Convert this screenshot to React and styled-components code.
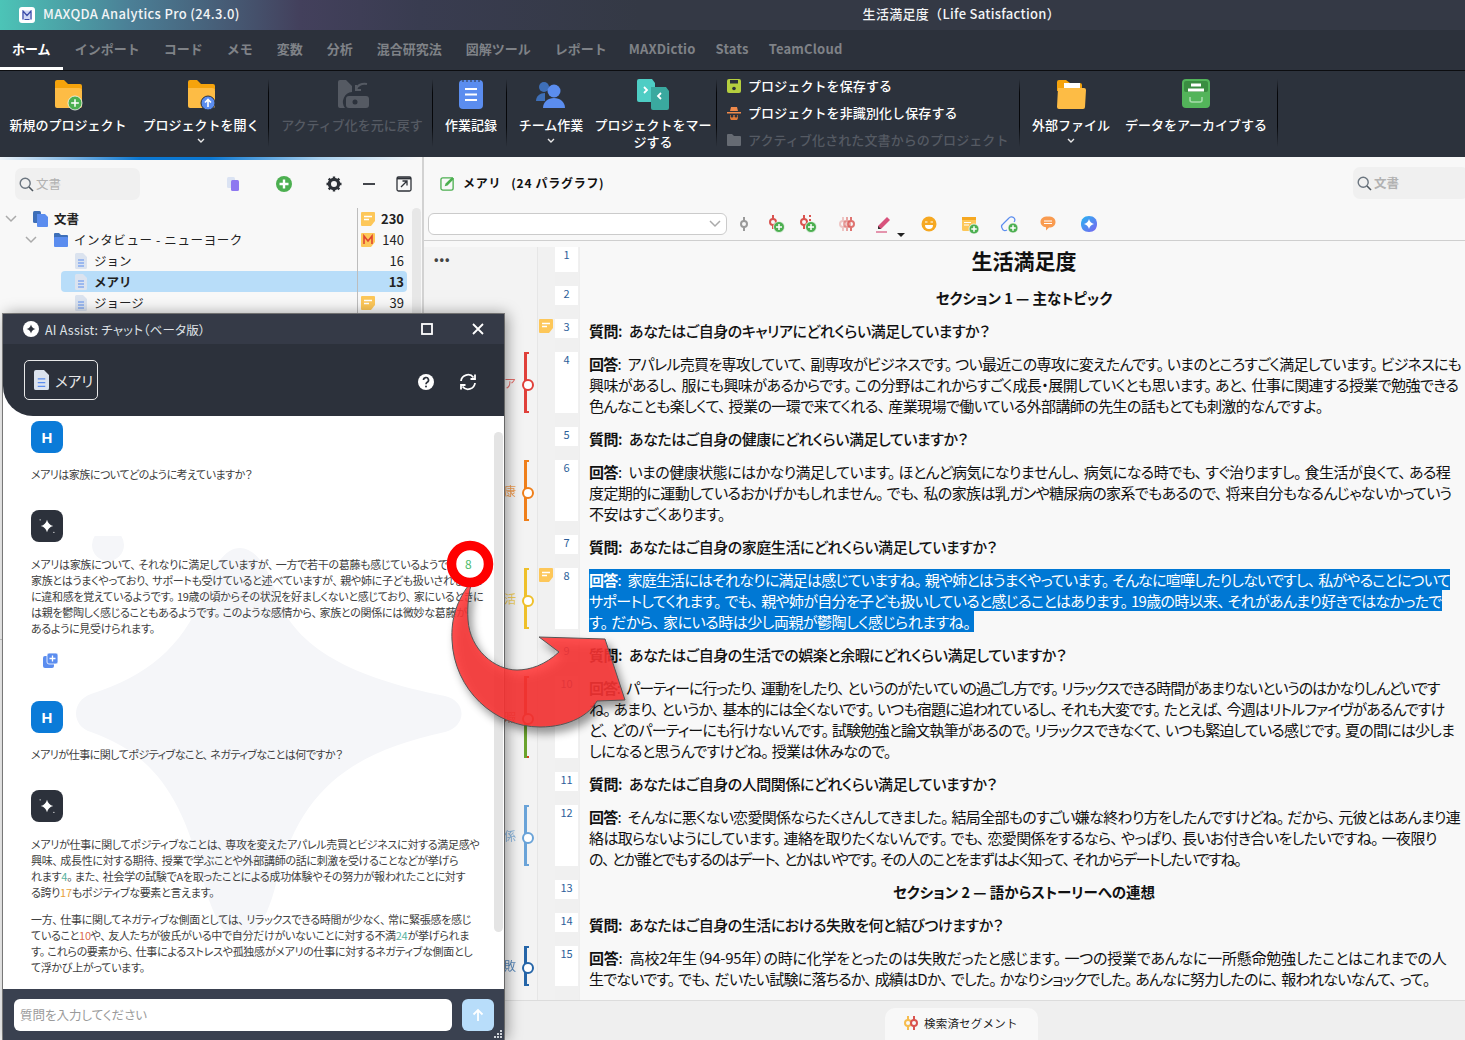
import React from 'react';
import styled, { createGlobalStyle } from 'styled-components';

const FONT = '"Noto Sans CJK JP", "Noto Sans", sans-serif';

const Global = createGlobalStyle`
  html, body { margin: 0; padding: 0; background: #f8f8f8; }
  body { font-family: ${FONT}; }
  * { box-sizing: border-box; }
`;

const Page = styled.div`
  position: relative; width: 1465px; height: 1040px; overflow: hidden;
  display: flex; flex-direction: column; background: #f8f8f8; color: #111;
`;

/* ---------- title bar ---------- */
const TitleBar = styled.header`
  height: 30px; flex: none; display: flex; align-items: center; padding: 0 405px 3px 19px;
  background: linear-gradient(90deg, #4cc4b7 0, #4b7f96 130px, #43405c 300px, #393c50 420px, #343945 640px);
  color: #f2f4f6; font-size: 13px; font-weight: 500;
`;
const Logo = styled.svg`width: 16px; height: 16px; margin: 3px 8px 0 0; flex: none;`;
const AppName = styled.span`letter-spacing: .35px;`;
const DocTitle = styled.span`margin-left: auto; letter-spacing: .3px;`;

/* ---------- tabs ---------- */
const TabBar = styled.nav`
  height: 41px; flex: none; display: flex; background: #2c313b; border-bottom: 1px solid #0c0d10;
`;
const Tab = styled.div`
  padding: 0 ${p => (p.$latin ? 10 : 12)}px; display: flex; align-items: center; font-size: 13px; font-weight: 700;
  letter-spacing: ${p => (p.$latin ? 0.2 : 0)}px;
  color: ${p => (p.$active ? '#fff' : '#7f8287')};
  border-bottom: 3px solid ${p => (p.$active ? '#fff' : 'transparent')};
`;

/* ---------- ribbon ---------- */
const Ribbon = styled.div`
  height: 86px; flex: none; display: flex; background: #2c323c; color: #fff;
`;
const RibbonGroup = styled.div`
  display: flex; gap: ${p => p.$gap || 0}px; padding-left: ${p => p.$pl || 0}px; width: ${p => p.$w}px; flex: none;
`;
const Sep = styled.div`
  width: 1px; flex: none; margin: 8px 0 10px;
  background: linear-gradient(180deg, transparent, #06070a 20%, #06070a 70%, transparent);
`;
const RibbonItem = styled.div`
  width: ${p => p.$w}px; flex: none; display: flex; flex-direction: column; align-items: center;
  padding-top: 7px; font-size: 13px; line-height: 17px; text-align: center; font-weight: 500; white-space: nowrap;
  color: ${p => (p.$off ? '#555a63' : '#fff')};
`;
const RibbonIcon = styled.svg`width: 36px; height: 34px; flex: none; margin-bottom: 4px;`;
const Caret = styled.svg`width: 8px; height: 6px; margin-top: 5px;`;
const RibbonList = styled.div`
  display: flex; flex-direction: column; padding: 1px 0 0 10px; font-size: 13px; font-weight: 500; line-height: 27px;
`;
const ListEntry = styled.div`
  display: flex; align-items: center; gap: 7px; color: ${p => (p.$off ? '#555a63' : '#fff')}; white-space: nowrap;
  letter-spacing: .1px;
`;
const ListIcon = styled.svg`width: 14px; height: 14px; flex: none;`;

/* ---------- main ---------- */
const Main = styled.div`flex: 1; min-height: 0; display: flex;`;
const LeftPane = styled.aside`
  width: 424px; flex: none; border-right: 2px solid #d2d2d2; display: flex; flex-direction: column; background: #f8f8f8;
`;
const Glow = styled.div`
  height: 3px; flex: none;
  background: linear-gradient(90deg, #eef4f9 0, #7fb6e4 70px, #0b78d2 140px, #0b78d2 210px, #a8d0ee 320px, #f8f8f8 420px);
`;
const PaneTools = styled.div`
  height: 48px; flex: none; display: flex; align-items: center; padding-left: 15px;
`;
const Search = styled.div`
  height: 32px; width: ${p => p.$w}px; background: #f0f0f0; border-radius: 7px; display: flex; align-items: center;
  gap: 2px; padding: 0 0 2px 4px; color: #b2b2b2; font-size: 12.5px;
`;
const ToolIcon = styled.svg`
  width: 18px; height: 18px; flex: none; margin-left: ${p => p.$ml}px;
`;
const TreeArea = styled.div`
  height: 432px; flex: none; display: flex; border-bottom: 1px solid #c9c9c9;
`;
const TreeRows = styled.div`width: 407px; flex: none;`;
const TreeScroll = styled.div`
  width: 9px; height: 420px; margin-left: 5px; background: #e7e7e7; border-radius: 5px;
`;
const TreeRow = styled.div`
  height: 21px; display: flex; align-items: center; margin-left: ${p => p.$ml}px;
  background: ${p => (p.$sel ? '#b8ddf9' : 'transparent')}; border-radius: 4px; font-size: 12.5px;
  font-weight: ${p => (p.$bold ? 700 : 400)};
`;
const TreeName = styled.div`
  flex: 1; min-width: 0; display: flex; align-items: center; white-space: nowrap; padding-left: ${p => p.$pl || 0}px;
  letter-spacing: ${p => p.$ls || 0}px; color: #222;
`;
const TreeIcon = styled.svg`
  width: ${p => p.$w}px; height: 16px; flex: none; margin-right: ${p => p.$mr}px; margin-left: ${p => p.$ml || 0}px;
`;
const Chevron = styled.svg`width: 12px; height: 8px; flex: none;`;
const CountCell = styled.div`
  width: 50px; flex: none; height: 21px; border-left: 1px solid #bdbdbd; display: flex; align-items: center;
  padding: 0 3px 0 3px;
`;
const Count = styled.span`margin-left: auto; font-size: 13px; color: #222; font-weight: ${p => (p.$bold ? 700 : 400)};`;
const MemoIcon = styled.svg`display: block; width: 14px; height: 14px; flex: none;`;

/* ---------- document pane ---------- */
const RightPane = styled.section`flex: 1; min-width: 0; display: flex; flex-direction: column;`;
const DocHeader = styled.div`
  height: 52px; flex: none; display: flex; align-items: center; padding: 0 0 0 16px; gap: 8px;
  font-size: 12px; font-weight: 700;
`;
const DocHeaderText = styled.span`white-space: pre; letter-spacing: .7px; margin-bottom: 1px;`;
const DocSearch = styled.div`margin-left: auto; position: relative; left: 4px;`;
const Toolbar = styled.div`
  height: 32px; flex: none; display: flex; align-items: center; padding: 0 0 1px 4px; border-bottom: 1px solid #cfcfcf;
`;
const Select = styled.div`
  width: 299px; height: 22px; border: 1px solid #cbcbcb; border-radius: 6px; background: #fff;
  display: flex; align-items: center; justify-content: flex-end; padding-right: 5px; margin-right: 7px;
`;
const ToolBtn = styled.svg`width: 20px; height: 20px; flex: none; margin-left: ${p => p.$ml}px;`;
const DownTri = styled.span`
  width: 0; height: 0; border-left: 4px solid transparent; border-right: 4px solid transparent;
  border-top: 4px solid #222; align-self: flex-end; margin: 0 0 0 4px; transform: translateY(-2px);
`;
const Doc = styled.div`flex: 1; min-height: 0; overflow: hidden; padding-top: 6px; background: #f8f8f8;`;
const Row = styled.div`display: grid; grid-template-columns: 114px 17px 24px 1fr;`;
const GutterCodes = styled.div`
  background: #f3f3f3; border-right: 1px solid #e6e6e6; padding: 0 8px 14px 10px; display: flex; justify-content: flex-end;
`;
const Dots = styled.span`
  margin-right: auto; font-size: 12px; line-height: 24px; font-weight: 700; letter-spacing: 1px; color: #444;
`;
const StripLabel = styled.span`
  font-size: 12px; line-height: 12px; align-self: center; color: ${p => p.$c}; opacity: .75; margin-right: 8px;
`;
const Strip = styled.div`
  position: relative; width: 5px; border: solid ${p => p.$c}; border-width: 2px 0 2px 3px;
  &::before { content: ''; position: absolute; left: -3px; bottom: -2px; height: 50%; width: 3px; background: ${p => p.$low || 'transparent'}; }
  &::after {
    content: ''; position: absolute; left: -5.5px; top: 50%; width: 8px; height: 8px; margin-top: -4px; border-radius: 50%;
    background: #fff; border: 2px solid ${p => p.$c};
  }
`;
const GutterMemos = styled.div`
  background: #f1f1f1; padding: 0 2px 14px 1px;
`;
const NumCol = styled.div`background: #f0f0f0; padding-bottom: 14px;`;
const NumBox = styled.div`
  background: #fff; height: 100%; text-align: center; font-size: 11px; line-height: 15px; color: #2d5f9a; width: 23px;
`;
const TextCol = styled.div`
  padding: 0 0 14px 9px; background: #f8f8f8; border-left: 1px solid #eee; min-width: 0;
`;
const Para = styled.div`
  margin: 1px 0 -3px; font-size: 15px; line-height: 21px; color: #111; font-feature-settings: "palt";
`;
const Line = styled.span`
  display: block; width: fit-content; white-space: nowrap;
  letter-spacing: ${p => p.$ls}px;
  ${p => p.$sel && 'background:#0078d4;color:#fff;'}
`;
const Punct = styled.span`margin-right: .24em;`;
const Lead = styled.b`font-weight: 700;`;
const Colon = styled.span`margin-right: 4px;`;
const QuestionLine = styled.span`font-weight: 500;`;
const DocTitleText = styled.div`
  font-size: 21px; line-height: 25px; font-weight: 700; text-align: center; width: 870px; position: relative; top: 1px;
`;
const Heading = styled.div`
  font-size: 14.5px; line-height: 19px; font-weight: 700; text-align: center; width: 870px; font-feature-settings: "palt";
  margin: 2px 0 -2px;
`;
const BottomBar = styled.div`
  height: 40px; flex: none; background: #efefef; border-top: 1px solid #dcdcdc; display: flex; align-items: flex-end; padding-left: 461px;
`;
const BottomTab = styled.div`
  width: 153px; height: 32px; background: #f8f8f8; border-radius: 10px 10px 0 0; display: flex; align-items: center;
  padding: 0 0 3px 18px; gap: 5px; font-size: 11.5px; color: #222; letter-spacing: .2px;
`;

/* ---------- chat window ---------- */
const ChatWindow = styled.div`
  position: absolute; left: 3px; top: 314px; width: 501px; height: 726px; display: flex; flex-direction: column;
  background: #fff; box-shadow: 3px 0 14px rgba(0,0,0,.4), 0 0 0 1px #8a8a8a; overflow: hidden;
`;
const ChatTitle = styled.div`
  height: 30px; flex: none; background: #353a47; color: #dfe2e6; display: flex; align-items: center; padding: 0 19px 0 20px;
  font-size: 12.5px; gap: 6px; font-feature-settings: "palt"; letter-spacing: .22px;
`;
const ChatTitleText = styled.span`flex: 1; white-space: nowrap; min-width: 0;`;
const ChatBtn = styled.svg`width: 14px; height: 14px; flex: none; margin-left: ${p => p.$ml}px;`;
const ChatHead = styled.div`
  height: 72px; flex: none; background: #2c313b; border-bottom-left-radius: 30px; display: flex; align-items: flex-start;
  padding: 16px 26px 0 21px;
`;
const DocChip = styled.div`
  width: 74px; height: 40px; border: 1px solid #e8e8e8; border-radius: 5px; display: flex; align-items: center; gap: 6px;
  padding-left: 9px; color: #e6e6e6; font-size: 14.5px; font-feature-settings: "palt";
`;
const HeadIcon = styled.svg`width: 18px; height: 18px; margin: 13px 0 0 ${p => p.$ml}px; flex: none;`;
const ChatBody = styled.div`
  position: relative; flex: 1; min-height: 0; padding: 5px 0 0 28px; overflow: hidden;
`;
const Watermark = styled.svg`position: absolute; left: 60px; top: 120px; width: 420px; height: 470px;`;
const ChatScroll = styled.div`
  position: absolute; left: 491px; top: 16px; width: 9px; height: 500px; background: #e4e4e4; border-radius: 5px;
`;
const Avatar = styled.div`
  position: relative; width: 32px; height: 32px; border-radius: 8px; display: flex; align-items: center; justify-content: center;
  background: ${p => p.$bg}; color: #fff; font-size: 15px; font-weight: 700; font-family: "Liberation Sans", sans-serif;
  margin-top: ${p => p.$mt || 0}px;
`;
const ChatLines = styled.p`
  position: relative; margin: ${p => p.$mt}px 0 0; font-size: 11px; line-height: 16px; color: #404040; white-space: nowrap;
  font-feature-settings: "palt"; letter-spacing: ${p => p.$ls}px;
`;
const Ref = styled.span`color: ${p => p.$c};`;
const CopyBtn = styled.svg`position: relative; display: block; width: 15px; height: 15px; margin: 17px 0 0 12px;`;
const ChatFoot = styled.div`
  position: relative; height: 51px; flex: none; background: #3a4150; display: flex; padding: 10px 10px 0 11px; gap: 10px;
`;
const ChatInput = styled.div`
  width: 438px; height: 32px; background: #fff; border-radius: 6px; color: #9a9a9a; font-size: 12.5px; line-height: 31px;
  padding-left: 6px; font-feature-settings: "palt";
`;
const SendBtn = styled.div`
  width: 32px; height: 32px; background: #b8ddfa; border-radius: 6px; display: flex; align-items: center; justify-content: center;
`;
const Grip = styled.svg`position: absolute; right: 1px; bottom: 1px; width: 9px; height: 9px;`;

/* ---------- call-out ---------- */
const Callout = styled.svg`position: absolute; left: 0; top: 0; width: 1465px; height: 1040px; pointer-events: none;`;
const RingDigit = styled.span`
  position: absolute; left: 465px; top: 555px; font-size: 12px; line-height: 17px; color: #4cbb6a;
`;

/* Meiryo-like spacing after full-stop marks in proportional text */
const spaced = s => s.split(/([。、？])/).map((part, i) =>
  /^[。、？]$/.test(part) ? <Punct key={i}>{part}</Punct> : part);
const ChatText = ({ $mt, $ls = -0.3, children }) => (
  <ChatLines $mt={$mt} $ls={$ls}>
    {React.Children.map(children, c => (typeof c === 'string' ? spaced(c) : c))}
  </ChatLines>
);

/* ---------- drawings ---------- */
const Plus = ({ x, y, r = 5.5 }) => (
  <g>
    <circle cx={x} cy={y} r={r} fill="#4caf50" stroke="#f8f8f8" strokeWidth=".8" />
    <path d={`M${x - r * .55} ${y}H${x + r * .55}M${x} ${y - r * .55}V${y + r * .55}`} stroke="#fff" strokeWidth="1.5" />
  </g>
);
const Folder = ({ children }) => (
  <g>
    <path d="M5 4a2 2 0 0 1 2-2h7l4 4h12a2 2 0 0 1 2 2v4H5z" fill="#f5a30c" />
    <path d="M5 10h24a3 3 0 0 1 3 3v15a2 2 0 0 1-2 2H7a2 2 0 0 1-2-2z" fill="#fdbc45" />
    {children}
  </g>
);
const CodeMark = ({ c = '#d9534f', x = 8, y = 8 }) => (
  <g fill="none" stroke={c} strokeWidth="2">
    <path d={`M${x} ${y - 7}V${y - 3}M${x} ${y + 3}V${y + 7}`} />
    <circle cx={x} cy={y} r="3" />
  </g>
);
const DocGlyph = ({ w = 12, h = 16 }) => (
  <g>
    <path d={`M0 1.5A1.5 1.5 0 0 1 1.5 0H${w - 4}L${w} 4V${h - 1.5}A1.5 1.5 0 0 1 ${w - 1.5} ${h}H1.5A1.5 1.5 0 0 1 0 ${h - 1.5}Z`} fill="#dbe3ef" />
    <path d={`M3 7H${w - 3}M3 10H${w - 3}M3 13H${w - 3}`} stroke="#5b8def" strokeWidth="1" />
  </g>
);
const Memo = () => (
  <MemoIcon viewBox="0 0 14 14">
    <path d="M1 0h12a1 1 0 0 1 1 1v8l-4 5H1a1 1 0 0 1-1-1V1a1 1 0 0 1 1-1z" fill="#fdc759" />
    <path d="M3 4.5h8M3 7.5h5" stroke="#fff" strokeWidth="1.3" />
  </MemoIcon>
);
const MemoM = () => (
  <MemoIcon viewBox="0 0 14 14">
    <path d="M1 0h12a1 1 0 0 1 1 1v8l-4 5H1a1 1 0 0 1-1-1V1a1 1 0 0 1 1-1z" fill="#fdc759" />
    <path d="M3 11V3l4 5 4-5v8" stroke="#e0452f" strokeWidth="1.6" fill="none" />
  </MemoIcon>
);
const Down = ({ c = '#aaa' }) => (
  <Chevron viewBox="0 0 12 8"><path d="M1 1l5 5 5-5" fill="none" stroke={c} strokeWidth="1.5" /></Chevron>
);
const RibbonCaret = () => (
  <Caret viewBox="0 0 8 6"><path d="M1 1l3 3 3-3" fill="none" stroke="#e8e8e8" strokeWidth="1.4" /></Caret>
);
const Spark = ({ c = '#2c313b', cx = 8, cy = 8, s = 4.5 }) => (
  <path fill={c} d={`M${cx} ${cy - s}Q${cx + s * .2} ${cy - s * .2} ${cx + s} ${cy}Q${cx + s * .2} ${cy + s * .2} ${cx} ${cy + s}Q${cx - s * .2} ${cy + s * .2} ${cx - s} ${cy}Q${cx - s * .2} ${cy - s * .2} ${cx} ${cy - s}Z`} />
);
const MagIcon = () => (
  <svg width="15" height="15" viewBox="0 0 15 15" style={{ flex: 'none', marginTop: 2 }}>
    <circle cx="6.2" cy="6.2" r="5" fill="none" stroke="#6c7680" strokeWidth="1.4" />
    <path d="M10 10l4 4" stroke="#4d565e" strokeWidth="1.6" />
  </svg>
);

const TABS = ['ホーム', 'インポート', 'コード', 'メモ', '変数', '分析', '混合研究法', '図解ツール', 'レポート', 'MAXDictio', 'Stats', 'TeamCloud'];

const BASE_LS = -0.62;
const ROWS = [
  { n: 1, kind: 'title', text: '生活満足度', dots: true },
  { n: 2, kind: 'heading', text: 'セクション 1 — 主なトピック' },
  { n: 3, kind: 'q', text: 'あなたはご自身のキャリアにどれくらい満足していますか？', memo: true },
  { n: 4, kind: 'a', strip: { c: '#e0403a', label: 'ア' }, adj: [-.11, .05, .05], lines: ['アパレル売買を専攻していて、副専攻がビジネスです。つい最近この専攻に変えたんです。いまのところすごく満足しています。ビジネスにも', '興味があるし、服にも興味があるからです。この分野はこれからすごく成長・展開していくとも思います。あと、仕事に関連する授業で勉強できる', '色んなことも楽しくて、授業の一環で来てくれる、産業現場で働いている外部講師の先生の話もとても刺激的なんですよ。'] },
  { n: 5, kind: 'q', text: 'あなたはご自身の健康にどれくらい満足していますか？' },
  { n: 6, kind: 'a', strip: { c: '#ef7f1a', label: '康' }, adj: [.08, 0, 0], lines: ['いまの健康状態にはかなり満足しています。ほとんど病気になりませんし、病気になる時でも、すぐ治りますし。食生活が良くて、ある程', '度定期的に運動しているおかげかもしれません。でも、私の家族は乳ガンや糖尿病の家系でもあるので、将来自分もなるんじゃないかっていう', '不安はすごくあります。'] },
  { n: 7, kind: 'q', text: 'あなたはご自身の家庭生活にどれくらい満足していますか？' },
  { n: 8, kind: 'a', sel: true, memo: true, strip: { c: '#efc02a', label: '活' }, adj: [-.16, -.05, .13], lines: ['家庭生活にはそれなりに満足は感じていますね。親や姉とはうまくやっています。そんなに喧嘩したりしないですし、私がやることについて', 'サポートしてくれます。でも、親や姉が自分を子ども扱いしていると感じることはあります。19歳の時以来、それがあんまり好きではなかったで', 'す。だから、家にいる時は少し両親が鬱陶しく感じられますね。'] },
  { n: 9, kind: 'q', text: 'あなたはご自身の生活での娯楽と余暇にどれくらい満足していますか？' },
  { n: 10, kind: 'a', strip: { c: '#d4401f', low: '#6aa32d', label: '暇' }, adj: [-.46, -.25, -.18, 0], lines: ['パーティーに行ったり、運動をしたり、というのがたいていの過ごし方です。リラックスできる時間があまりないというのはかなりしんどいです', 'ね。あまり、というか、基本的には全くないです。いつも宿題に追われているし、それも大変です。たとえば、今週はリトルファイヴがあるんですけ', 'ど、どのパーティーにも行けないんです。試験勉強と論文執筆があるので。リラックスできなくて、いつも緊迫している感じです。夏の間には少しま', 'しになると思うんですけどね。授業は休みなので。'] },
  { n: 11, kind: 'q', text: 'あなたはご自身の人間関係にどれくらい満足していますか？' },
  { n: 12, kind: 'a', strip: { c: '#6aa3d8', label: '係' }, adj: [-.08, 0, -.75], lines: ['そんなに悪くない恋愛関係ならたくさんしてきました。結局全部ものすごい嫌な終わり方をしたんですけどね。だから、元彼とはあんまり連', '絡は取らないようにしています。連絡を取りたくないんです。でも、恋愛関係をするなら、やっぱり、長いお付き合いをしたいですね。一夜限り', 'の、とか誰とでもするのはデート、とかはいやです。その人のことをまずはよく知って、それからデートしたいですね。'] },
  { n: 13, kind: 'heading', text: 'セクション 2 — 語からストーリーへの連想' },
  { n: 14, kind: 'q', text: 'あなたはご自身の生活における失敗を何と結びつけますか？' },
  { n: 15, kind: 'a', strip: { c: '#2565a8', label: '敗' }, adj: [.39, -.14], lines: ['高校2年生（94-95年）の時に化学をとったのは失敗だったと感じます。一つの授業であんなに一所懸命勉強したことはこれまでの人', '生でないです。でも、だいたい試験に落ちるか、成績はDか、でした。かなりショックでした。あんなに努力したのに、報われないなんて、って。'] },
];

const DocRowText = ({ r }) => {
  if (r.kind === 'title') return <DocTitleText>{r.text}</DocTitleText>;
  if (r.kind === 'heading') return <Heading>{r.text}</Heading>;
  if (r.kind === 'q') return (
    <Para>
      <Line $ls={-0.45}><Lead>質問</Lead><QuestionLine><Colon>:</Colon> {spaced(r.text)}</QuestionLine></Line>
    </Para>
  );
  return (
    <Para>
      {r.lines.map((l, i) => (
        <Line key={i} $sel={r.sel} $ls={BASE_LS + (r.adj?.[i] || 0)}>
          {i === 0 && <><Lead>回答</Lead><Colon>:</Colon> </>}{spaced(l)}
        </Line>
      ))}
    </Para>
  );
};

const ToolbarIcons = () => (
  <>
    <ToolBtn $ml={0} viewBox="0 0 20 20"><CodeMark c="#9a9a9a" x={10} y={10} /></ToolBtn>
    <ToolBtn $ml={12} viewBox="0 0 20 20"><CodeMark x={7} y={8} /><Plus x={13} y={13} /></ToolBtn>
    <ToolBtn $ml={12} viewBox="0 0 20 20"><CodeMark x={6} y={8} /><path d="M12 1v2M12 5v2" stroke="#d9534f" strokeWidth="2" /><Plus x={13} y={13} /></ToolBtn>
    <ToolBtn $ml={20} viewBox="0 0 20 20">
      <g opacity=".3"><CodeMark x={5} y={10} /></g><g opacity=".5"><CodeMark x={9} y={10} /></g><g opacity=".8"><CodeMark x={13} y={10} /></g>
    </ToolBtn>
    <ToolBtn $ml={15} viewBox="0 0 20 20">
      <path d="M5 12L14 3l3 3-9 9H5z" fill="#d8527c" /><path d="M5 12l3 3H5z" fill="#333" /><path d="M3 18h11" stroke="#d8527c" strokeWidth="1.2" />
    </ToolBtn>
    <DownTri />
    <ToolBtn $ml={14} viewBox="0 0 20 20">
      <circle cx="10" cy="10" r="7.5" fill="#f6a821" /><path d="M6 8h2.5M11.5 8H14" stroke="#fff" strokeWidth="1.2" /><path d="M6 11h8a4 4 0 0 1-8 0z" fill="#fff" />
    </ToolBtn>
    <ToolBtn $ml={20} viewBox="0 0 20 20">
      <rect x="3" y="3" width="14" height="14" rx="1.5" fill="#fdc759" /><rect x="3" y="3" width="14" height="3" fill="#f6a821" />
      <path d="M5 8.5h7M5 11h5" stroke="#fff" /><Plus x={15} y={15} r={5} />
    </ToolBtn>
    <ToolBtn $ml={20} viewBox="0 0 20 20">
      <path d="M3 14a3 3 0 0 1 1-4l6-6a3 3 0 0 1 5 4" fill="none" stroke="#5b8def" strokeWidth="1.2" />
      <path d="M3 14c1 3 3 3 5 2" fill="none" stroke="#5b8def" strokeWidth="1.2" /><Plus x={14} y={14} r={5} />
    </ToolBtn>
    <ToolBtn $ml={19} viewBox="0 0 20 20">
      <path d="M10 2.5c5 0 7.500 2 7.500 5.500s-2.500 5.500-6.500 5.500l-3 3v-3.200c-3-.5-5.500-2.300-5.500-5.300 0-3.500 2.500-5.500 7.500-5.500z" fill="#f99b50" />
      <path d="M6 7h8M6 9.500h8" stroke="#fff" strokeWidth="1.1" />
    </ToolBtn>
    <ToolBtn $ml={21} viewBox="0 0 20 20">
      <defs><linearGradient id="aig" x1="0" y1="0" x2="1" y2="1"><stop offset="0" stopColor="#27b6f2" /><stop offset="1" stopColor="#7a63f0" /></linearGradient></defs>
      <path d="M10 2c5 0 8 3 8 8s-3 8-8 8-8-3-8-8 3-8 8-8z" fill="url(#aig)" /><Spark c="#fff" cx={10} cy={10} s={5} />
    </ToolBtn>
  </>
);

const AiAvatar = ({ $mt }) => (
  <Avatar $bg="#2c313b" $mt={$mt}>
    <svg width="20" height="20" viewBox="0 0 16 16"><Spark c="#fff" s={5} /><circle cx="2.500" cy="3" r=".5" fill="#fff" /><circle cx="13.500" cy="13" r=".5" fill="#fff" /></svg>
  </Avatar>
);

export default function App() {
  return (
    <Page>
      <Global />
      <TitleBar>
        <Logo viewBox="0 0 16 16">
          <rect width="16" height="16" rx="3" fill="#fff" />
          <rect x="3" y="3.500" width="10" height="9" fill="#cfd7f4" />
          <path d="M3.500 3.500l4.500 5 4.500-5M4 12.500V5M12 12.500V5M5.500 12.500h5" fill="none" stroke="#3c4ca8" strokeWidth="1.200" />
        </Logo>
        <AppName>MAXQDA Analytics Pro (24.3.0)</AppName>
        <DocTitle>生活満足度（Life Satisfaction）</DocTitle>
      </TitleBar>

      <TabBar>
        {TABS.map((t, i) => <Tab key={t} $active={i === 0} $latin={i > 8}>{t}</Tab>)}
      </TabBar>

      <Ribbon>
        <RibbonGroup $w={268} $pl={4} $gap={5}>
          <RibbonItem $w={128}>
            <RibbonIcon viewBox="0 0 36 34"><Folder><Plus x={25} y={25} r={7} /></Folder></RibbonIcon>
            新規のプロジェクト
          </RibbonItem>
          <RibbonItem $w={128}>
            <RibbonIcon viewBox="0 0 36 34">
              <Folder>
                <circle cx="25" cy="25" r="7" fill="#5b8def" stroke="#2c323c" />
                <path d="M25 29v-7M22 24.500l3-3 3 3" fill="none" stroke="#fff" strokeWidth="1.600" />
              </Folder>
            </RibbonIcon>
            プロジェクトを開く
            <RibbonCaret />
          </RibbonItem>
        </RibbonGroup>
        <Sep />
        <RibbonGroup $w={163} $pl={3}>
          <RibbonItem $w={160} $off>
            <RibbonIcon viewBox="0 0 36 34">
              <path d="M4 4a2 2 0 0 1 2-2h6l6 6v6a10 10 0 0 0-7 16H6a2 2 0 0 1-2-2z" fill="#555a63" />
              <rect x="12" y="18" width="23" height="12" rx="3" fill="#555a63" /><circle cx="21" cy="24" r="2.500" fill="#2c323c" />
              <path d="M22 12c1-5 6-7 11-6M22 7v5h5" fill="none" stroke="#555a63" strokeWidth="2" />
            </RibbonIcon>
            アクティブ化を元に戻す
          </RibbonItem>
        </RibbonGroup>
        <Sep />
        <RibbonGroup $w={73}>
          <RibbonItem $w={76}>
            <RibbonIcon viewBox="0 0 36 34">
              <rect x="6" y="2" width="24" height="29" rx="4" fill="#5b8def" />
              <path d="M10 1v3M14 1v3M18 1v3M22 1v3M26 1v3" stroke="#2c323c" strokeWidth="1" />
              <path d="M12 11h12M12 16.500h12M12 22h12" stroke="#fff" strokeWidth="1.800" />
            </RibbonIcon>
            作業記録
          </RibbonItem>
        </RibbonGroup>
        <Sep />
        <RibbonGroup $w={209}>
          <RibbonItem $w={88}>
            <RibbonIcon viewBox="0 0 36 34">
              <circle cx="11" cy="9" r="5" fill="#3e6fb8" /><path d="M3 23c0-5 4-8 9-8v8z" fill="#3e6fb8" />
              <circle cx="21" cy="13" r="6.500" fill="#5b8def" /><path d="M10 30c0-6 5-10 11-10s11 4 11 10z" fill="#5b8def" />
            </RibbonIcon>
            チーム作業
            <RibbonCaret />
          </RibbonItem>
          <RibbonItem $w={116}>
            <RibbonIcon viewBox="0 0 36 34">
              <path d="M2 3a2 2 0 0 1 2-2h13l3 4v17a2 2 0 0 1-2 2H4a2 2 0 0 1-2-2z" fill="#4ecdc4" />
              <path d="M16 9h15l3 4v17a2 2 0 0 1-2 2H18a2 2 0 0 1-2-2z" fill="#3aa99f" />
              <path d="M9 9l3 3-3 3M26 15l-3 3 3 3" fill="none" stroke="#fff" strokeWidth="1.800" />
            </RibbonIcon>
            <span>プロジェクトをマー<br />ジする</span>
          </RibbonItem>
        </RibbonGroup>
        <Sep />
        <RibbonGroup $w={302}>
          <RibbonList>
            <ListEntry>
              <ListIcon viewBox="0 0 14 14">
                <rect width="14" height="14" rx="2" fill="#b5cf3f" /><rect x="3" y="1" width="8" height="3.500" fill="#2c323c" /><circle cx="7" cy="9.500" r="1.800" fill="#2c323c" />
              </ListIcon>
              プロジェクトを保存する
            </ListEntry>
            <ListEntry>
              <ListIcon viewBox="0 0 14 14">
                <path d="M3 5l1-4h6l1 4z" fill="#f08a4b" /><path d="M0 6h14v1.500H0z" fill="#f08a4b" />
                <path d="M3 9h8v2a3 3 0 0 1-8 0z" fill="#e07b3a" /><circle cx="5" cy="10" r="1.500" fill="#2c323c" /><circle cx="9" cy="10" r="1.500" fill="#2c323c" />
              </ListIcon>
              プロジェクトを非識別化し保存する
            </ListEntry>
            <ListEntry $off>
              <ListIcon viewBox="0 0 14 14">
                <path d="M0 2a1 1 0 0 1 1-1h4l2 2h6a1 1 0 0 1 1 1v8a1 1 0 0 1-1 1H1a1 1 0 0 1-1-1z" fill="#666b73" />
              </ListIcon>
              アクティブ化された文書からのプロジェクト
            </ListEntry>
          </RibbonList>
        </RibbonGroup>
        <Sep />
        <RibbonGroup $w={257}>
          <RibbonItem $w={102}>
            <RibbonIcon viewBox="0 0 36 34">
              <path d="M4 4a2 2 0 0 1 2-2h7l4 3h10a2 2 0 0 1 2 2v6H4z" fill="#f5a30c" />
              <rect x="11" y="5" width="16" height="5" fill="#fff" />
              <path d="M5 10h26a2 2 0 0 1 2 2l-1 17a2 2 0 0 1-2 2H6a2 2 0 0 1-2-2z" fill="#fdbc45" />
            </RibbonIcon>
            外部ファイル
            <RibbonCaret />
          </RibbonItem>
          <RibbonItem $w={148}>
            <RibbonIcon viewBox="0 0 36 34">
              <rect x="4" y="1" width="28" height="29" rx="4" fill="#53b45a" />
              <rect x="6" y="3" width="24" height="11" rx="2" fill="#3a8d41" />
              <path d="M13 7h10" stroke="#fff" strokeWidth="3" /><path d="M10 12h16" stroke="#fff" strokeWidth="3" />
              <path d="M12 19v3a2 2 0 0 0 2 2h8a2 2 0 0 0 2-2v-3" fill="none" stroke="#a6dbaa" strokeWidth="1.600" />
            </RibbonIcon>
            データをアーカイブする
          </RibbonItem>
        </RibbonGroup>
        <Sep />
      </Ribbon>

      <Main>
        <LeftPane>
          <Glow />
          <PaneTools>
            <Search $w={125}><MagIcon />文書</Search>
            <ToolIcon $ml={85} viewBox="0 0 18 18">
              <rect x="2" y="2" width="8" height="11" rx="1.500" fill="#dbe3f3" />
              <rect x="6" y="5" width="8" height="11" rx="1.500" fill="#8e78f0" />
            </ToolIcon>
            <ToolIcon $ml={32} viewBox="0 0 18 18">
              <circle cx="9" cy="9" r="8" fill="#4caf50" /><path d="M4.500 9h9M9 4.500v9" stroke="#fff" strokeWidth="2.400" />
            </ToolIcon>
            <ToolIcon $ml={32} viewBox="0 0 18 18">
              <circle cx="9" cy="9" r="4.600" fill="none" stroke="#2e3238" strokeWidth="3.200" />
              <path d="M9 1.500v3M9 13.500v3M1.500 9h3M13.500 9h3M3.700 3.700l2 2M12.300 12.300l2 2M14.300 3.700l-2 2M5.700 12.300l-2 2" stroke="#2e3238" strokeWidth="2.400" />
            </ToolIcon>
            <ToolIcon $ml={17} viewBox="0 0 18 18"><path d="M3 9h12" stroke="#2e3238" strokeWidth="1.800" /></ToolIcon>
            <ToolIcon $ml={17} viewBox="0 0 18 18">
              <rect x="2" y="2" width="14" height="14" rx="1.500" fill="none" stroke="#2e3238" strokeWidth="1.300" />
              <path d="M2 3.500h14" stroke="#2e3238" strokeWidth="1.800" /><path d="M6 12l6-6M7.500 6H12v4.500" fill="none" stroke="#2e3238" strokeWidth="1.300" />
            </ToolIcon>
          </PaneTools>
          <TreeArea>
            <TreeRows>
              <TreeRow $ml={5} $bold>
                <TreeName>
                  <Down />
                  <TreeIcon $w={16} $ml={16} $mr={5} viewBox="0 0 16 16">
                    <rect x="0" y="0" width="8" height="12" rx="1.500" fill="#3e6fb8" /><path d="M4 3h8l3 3v9a1 1 0 0 1-1 1H5a1 1 0 0 1-1-1z" fill="#5b8def" />
                  </TreeIcon>
                  文書
                </TreeName>
                <CountCell><Memo /><Count $bold>230</Count></CountCell>
              </TreeRow>
              <TreeRow $ml={25}>
                <TreeName $ls={0.6}>
                  <Down />
                  <TreeIcon $w={14} $ml={17} $mr={6} viewBox="0 0 14 16">
                    <path d="M0 2a1 1 0 0 1 1-1h4l2 2h6a1 1 0 0 1 1 1v2H0z" fill="#3e6fb8" /><rect y="5" width="14" height="10" rx="1" fill="#5b8def" />
                  </TreeIcon>
                  インタビュー - ニューヨーク
                </TreeName>
                <CountCell><MemoM /><Count>140</Count></CountCell>
              </TreeRow>
              <TreeRow $ml={61}>
                <TreeName $pl={14}><TreeIcon $w={12} $mr={7} viewBox="0 0 12 16"><DocGlyph /></TreeIcon>ジョン</TreeName>
                <CountCell><Count>16</Count></CountCell>
              </TreeRow>
              <TreeRow $ml={61} $sel $bold>
                <TreeName $pl={14}><TreeIcon $w={12} $mr={7} viewBox="0 0 12 16"><DocGlyph /></TreeIcon>メアリ</TreeName>
                <CountCell><Count $bold>13</Count></CountCell>
              </TreeRow>
              <TreeRow $ml={61}>
                <TreeName $pl={14}><TreeIcon $w={12} $mr={7} viewBox="0 0 12 16"><DocGlyph /></TreeIcon>ジョージ</TreeName>
                <CountCell><Memo /><Count>39</Count></CountCell>
              </TreeRow>
            </TreeRows>
            <TreeScroll />
          </TreeArea>
        </LeftPane>

        <RightPane>
          <DocHeader>
            <svg width="15" height="15" viewBox="0 0 16 16" style={{ flex: 'none' }}>
              <rect x="1" y="2" width="13" height="13" rx="2" fill="none" stroke="#4caf50" strokeWidth="1.400" />
              <path d="M6 8l7-7 2 2-7 7-3 1z" fill="#4caf50" />
            </svg>
            <DocHeaderText>メアリ   (24 パラグラフ)</DocHeaderText>
            <DocSearch><Search $w={116}><MagIcon />文書</Search></DocSearch>
          </DocHeader>
          <Toolbar>
            <Select><Down /></Select>
            <ToolbarIcons />
          </Toolbar>
          <Doc>
            {ROWS.map(r => (
              <Row key={r.n}>
                <GutterCodes>
                  {r.dots && <Dots>•••</Dots>}
                  {r.strip && <StripLabel $c={r.strip.c}>{r.strip.label}</StripLabel>}
                  {r.strip && <Strip $c={r.strip.c} $low={r.strip.low} />}
                </GutterCodes>
                <GutterMemos>{r.memo && <Memo />}</GutterMemos>
                <NumCol><NumBox>{r.n}</NumBox></NumCol>
                <TextCol><DocRowText r={r} /></TextCol>
              </Row>
            ))}
          </Doc>
          <BottomBar>
            <BottomTab>
              <svg width="16" height="16" viewBox="0 0 16 16" style={{ flex: 'none' }}>
                <g opacity=".9"><CodeMark c="#f6b73c" x={5} y={8} /></g><CodeMark c="#d9534f" x={11} y={8} />
              </svg>
              検索済セグメント
            </BottomTab>
          </BottomBar>
        </RightPane>
      </Main>

      <ChatWindow>
        <ChatTitle>
          <svg width="16" height="16" viewBox="0 0 16 16" style={{ flex: 'none' }}>
            <circle cx="8" cy="8" r="8" fill="#fff" /><Spark />
          </svg>
          <ChatTitleText>AI Assist: チャット（ベータ版）</ChatTitleText>
          <ChatBtn $ml={0} viewBox="0 0 14 14"><rect x="2" y="2" width="10" height="10" fill="none" stroke="#fff" strokeWidth="1.800" /></ChatBtn>
          <ChatBtn $ml={31} viewBox="0 0 14 14"><path d="M2 2l10 10M12 2L2 12" stroke="#fff" strokeWidth="1.800" /></ChatBtn>
        </ChatTitle>
        <ChatHead>
          <DocChip>
            <svg width="15" height="20" viewBox="0 0 12 16" style={{ flex: 'none' }}><DocGlyph /></svg>
            メアリ
          </DocChip>
          <HeadIcon $ml={319} viewBox="0 0 18 18">
            <circle cx="9" cy="9" r="8" fill="#fff" />
            <path d="M6.500 7a2.500 2.500 0 1 1 3.700 2.200c-.8.500-1.200 1-1.200 2" fill="none" stroke="#2c313b" strokeWidth="1.700" />
            <circle cx="9" cy="13.500" r="1" fill="#2c313b" />
          </HeadIcon>
          <HeadIcon $ml={24} viewBox="0 0 18 18">
            <path d="M2 8a7 7 0 0 1 12.500-3.500M16 10a7 7 0 0 1-12.500 3.500" fill="none" stroke="#fff" strokeWidth="1.800" />
            <path d="M16 1.500v4.500h-4.500M2 16.500V12h4.500" fill="none" stroke="#fff" strokeWidth="1.800" />
          </HeadIcon>
        </ChatHead>
        <ChatBody>
          <Watermark viewBox="0 0 420 470">
            <circle cx="45" cy="9" r="16" fill="#f5f6f9" />
            <path d="M177 12C192 12 205 30 214 60C232 112 290 142 382 160C404 165 404 190 382 196C290 216 238 252 214 344C205 382 192 402 177 402C162 402 150 382 140 344C118 252 84 216 28 196C8 190 8 165 28 158C84 140 118 112 140 60C150 30 162 12 177 12Z" fill="#f5f6f9" />
          </Watermark>
          <ChatScroll />
          <Avatar $bg="#0b7bd8">H</Avatar>
          <ChatText $mt={13} $ls={-0.5}>メアリは家族についてどのように考えていますか？</ChatText>
          <AiAvatar $mt={28} />
          <ChatText $mt={14}>
            メアリは家族について、それなりに満足していますが、一方で若干の葛藤も感じているようです。<br />
            家族とはうまくやっており、サポートも受けていると述べていますが、親や姉に子ども扱いされること<br />
            に違和感を覚えているようです。19歳の頃からその状況を好ましくないと感じており、家にいるときに<br />
            は親を鬱陶しく感じることもあるようです。このような感情から、家族との関係には微妙な葛藤が<br />
            あるように見受けられます。
          </ChatText>
          <CopyBtn viewBox="0 0 15 15">
            <rect x="0" y="3" width="11" height="12" rx="2" fill="#5b8def" />
            <rect x="4" y="0" width="11" height="11" rx="2" fill="#5b8def" stroke="#fff" strokeWidth=".8" />
            <path d="M9.500 2.500v6M6.500 5.500h6" stroke="#fff" strokeWidth="1.300" />
          </CopyBtn>
          <Avatar $bg="#0b7bd8" $mt={33}>H</Avatar>
          <ChatText $mt={13} $ls={-0.5}>メアリが仕事に関してポジティブなこと、ネガティブなことは何ですか？</ChatText>
          <AiAvatar $mt={28} />
          <ChatText $mt={14}>
            メアリが仕事に関してポジティブなことは、専攻を変えたアパレル売買とビジネスに対する満足感や<br />
            興味、成長性に対する期待、授業で学ぶことや外部講師の話に刺激を受けることなどが挙げら<br />
            れます<Ref $c="#56b3a0">4</Ref>。また、社会学の試験でAを取ったことによる成功体験やその努力が報われたことに対す<br />
            る誇り<Ref $c="#e9a13b">17</Ref>もポジティブな要素と言えます。
          </ChatText>
          <ChatText $mt={11}>
            一方、仕事に関してネガティブな側面としては、リラックスできる時間が少なく、常に緊張感を感じ<br />
            ていること<Ref $c="#d9694f">10</Ref>や、友人たちが彼氏がいる中で自分だけがいないことに対する不満<Ref $c="#56b3a0">24</Ref>が挙げられま<br />
            す。これらの要素から、仕事によるストレスや孤独感がメアリの仕事に対するネガティブな側面とし<br />
            て浮かび上がっています。
          </ChatText>
        </ChatBody>
        <ChatFoot>
          <ChatInput>質問を入力してください</ChatInput>
          <SendBtn>
            <svg width="14" height="14" viewBox="0 0 14 14"><path d="M7 13V2M2.500 6.500L7 2l4.500 4.500" fill="none" stroke="#fff" strokeWidth="1.800" /></svg>
          </SendBtn>
          <Grip viewBox="0 0 9 9" fill="#cfd3d8">
            <rect x="6" y="0" width="2" height="2" /><rect x="3" y="3" width="2" height="2" /><rect x="6" y="3" width="2" height="2" />
            <rect x="0" y="6" width="2" height="2" /><rect x="3" y="6" width="2" height="2" /><rect x="6" y="6" width="2" height="2" />
          </Grip>
        </ChatFoot>
      </ChatWindow>

      <Callout viewBox="0 0 1465 1040">
        <circle cx="470" cy="564" r="18.500" fill="#fff" />
        <path
          d="M472 581C456 600 451 620 452 640C454 690 495 727 540 727C570 727 590 714 597 701L625 700L605 639L539 637L559 652C545 665 530 670 517 670C495 670 470 650 468 620C467 605 469 592 472 581Z"
          fill="#ff3535" fillOpacity=".87" stroke="#555" strokeWidth="1"
          style={{ filter: 'drop-shadow(4px 6px 4px rgba(0,0,0,.45))' }}
        />
        <circle cx="470" cy="564" r="18.500" fill="none" stroke="#f00" strokeWidth="9.500" />
      </Callout>
      <RingDigit>8</RingDigit>
    </Page>
  );
}
